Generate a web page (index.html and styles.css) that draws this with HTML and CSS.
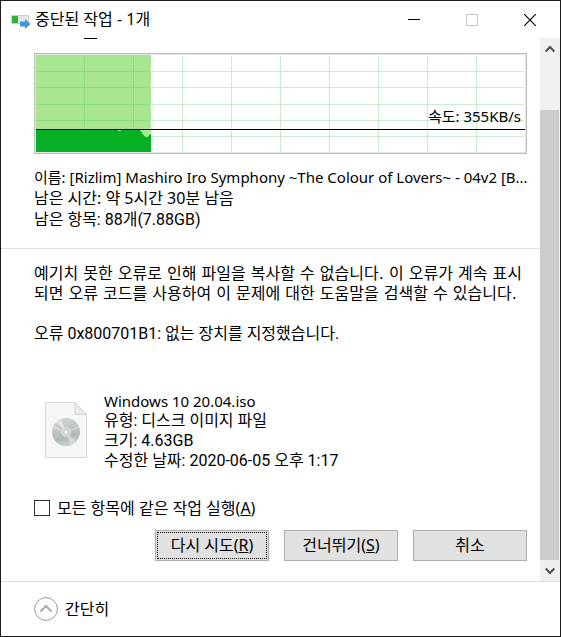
FILE: index.html
```html
<!DOCTYPE html>
<html lang="ko">

<head>
    <meta charset="UTF-8">
    <meta name="viewport" content="width=device-width, initial-scale=1.0">
    <title>중단된 작업 - 1개</title>
    <link rel="stylesheet" href="styles.css">
</head>

<body>

    <div class="window">
        <header class="titlebar">
            <svg class="titlebar-icon" width="20" height="14" viewBox="0 0 20 14" aria-hidden="true">
                <rect x="0.5" y="0.5" width="17" height="8" fill="#e6e6e6" stroke="#cfcfcf"/>
                <rect x="1" y="1" width="6" height="7" fill="#32b032"/>
                <path d="M9 6.500h5V4l5.500 5L14 14v-2.500H9z" fill="#3c96e4"/>
            </svg>
            <h1 class="titlebar-title">중단된 작업 - 1개</h1>
            <div class="titlebar-buttons">
                <button class="titlebar-button" type="button" aria-label="최소화">
                    <svg width="12" height="12" viewBox="0 0 12 12"><path d="M0 5.500h12" stroke="#000"/></svg>
                </button>
                <button class="titlebar-button" type="button" aria-label="최대화" disabled>
                    <svg width="12" height="12" viewBox="0 0 12 12"><rect x="0.5" y="0.5" width="11" height="11" fill="none" stroke="#ccc"/></svg>
                </button>
                <button class="titlebar-button" type="button" aria-label="닫기">
                    <svg width="12" height="12" viewBox="0 0 12 12"><path d="M0 0l12 12M12 0L0 12" stroke="#000" stroke-width="1.1"/></svg>
                </button>
            </div>
        </header>

        <div class="content">
            <main class="panel">
                <section class="progress">
                    <div class="clipped-heading"></div>
                    <div class="chart">
                        <svg class="chart-plot" viewBox="0 0 489 97" preserveAspectRatio="none" shape-rendering="crispEdges" aria-hidden="true">
                            <rect width="115" height="97" fill="#a8e692"/>
                            <path d="M0 16.500h488M0 32.500h488M0 49.500h488M0 65.500h488M0 81.500h488M48.500 1v96M97.500 1v96M146.500 1v96M195.500 1v96M244.500 1v96M293.500 1v96M342.500 1v96M391.500 1v96M440.500 1v96" fill="none" stroke="#c8eed0"/>
                            <path d="M0 16.500h114M0 32.500h114M0 49.500h114M0 65.500h114M48.500 1v74M97.500 1v74" fill="none" stroke="#8ade7a"/>
                            <path d="M0 74h115v23H0z" fill="#06b025"/>
                            <path d="M82 75h3v1h-3zM104 75h11v3l-4 4h-2z" fill="#a8e692"/>
                            <path d="M0 74.500h489" stroke="#000"/>
                        </svg>
                        <span class="chart-speed">속도: 355KB/s</span>
                    </div>
                    <div class="progress-info">
                        <p class="file-name">이름: [Rizlim] Mashiro Iro Symphony ~The Colour of Lovers~ - 04v2 [B...</p>
                        <p>남은 시간: 약 5시간 30분 남음</p>
                        <p class="values">남은 항목: 88개(7.88GB)</p>
                    </div>
                </section>

                <section class="error">
                    <p class="message">예기치 못한 오류로 인해 파일을 복사할 수 없습니다. 이 오류가 계속 표시<br>되면 오류 코드를 사용하여 이 문제에 대한 도움말을 검색할 수 있습니다.</p>
                    <p class="error-code values">오류 0x800701B1: 없는 장치를 지정했습니다.</p>

                    <div class="file">
                        <svg class="file-icon" width="42" height="56" viewBox="0 0 42 56" aria-hidden="true">
                            <defs>
                                <linearGradient id="disc" x1="0" y1="0" x2="0.3" y2="1">
                                    <stop offset="0" stop-color="#d3dbda"/>
                                    <stop offset="0.4" stop-color="#c2cac9"/>
                                    <stop offset="0.75" stop-color="#b2b9b8"/>
                                    <stop offset="1" stop-color="#c4caca"/>
                                </linearGradient>
                            </defs>
                            <path d="M0.5 0.5h29.500l11.500 12v43h-41z" fill="#f5f6f7" stroke="#d9dadc"/>
                            <path d="M30 0.5v12h11.500z" fill="#eaebed" stroke="#cfd1d3"/>
                            <circle cx="21" cy="30" r="14" fill="url(#disc)"/>
                            <path d="M21 30L11 20.200A14 14 0 0 1 16 17z" fill="#e0e6e4"/>
                            <path d="M21 30L31 39.800A14 14 0 0 1 26 43z" fill="#d3d9d8"/>
                            <path d="M21 30L7.500 26.500l1-3z" fill="#ddd3e0"/>
                            <path d="M21 30l12.500-6 0.800 2z" fill="#cde0cd"/>
                            <circle cx="21" cy="30" r="4.500" fill="#cfd5d4" stroke="#dde1e0"/>
                            <circle cx="21" cy="30" r="2" fill="#f5f6f7" stroke="#c4caca" stroke-width="0.500"/>
                        </svg>
                        <div class="file-details values">
                            <p class="iso-name">Windows 10 20.04.iso</p>
                            <p>유형: 디스크 이미지 파일</p>
                            <p>크기: 4.63GB</p>
                            <p>수정한 날짜: 2020-06-05 오후 1:17</p>
                        </div>
                    </div>

                    <div class="apply-all">
                        <input type="checkbox" id="applyAll">
                        <label for="applyAll">모든 항목에 같은 작업 실행(<u>A</u>)</label>
                    </div>

                    <div class="actions">
                        <button class="action action-default" type="button">다시 시도(<u>R</u>)</button>
                        <button class="action" type="button">건너뛰기(<u>S</u>)</button>
                        <button class="action" type="button">취소</button>
                    </div>
                </section>
            </main>

            <div class="scrollbar">
                <button class="scroll-button" type="button" aria-label="위로">
                    <svg width="10" height="8" viewBox="0 0 10 8"><path d="M0.700 6.500L5 2l4.300 4.500" fill="none" stroke="#505050" stroke-width="2"/></svg>
                </button>
                <div class="scroll-thumb"></div>
                <button class="scroll-button" type="button" aria-label="아래로">
                    <svg width="10" height="8" viewBox="0 0 10 8"><path d="M0.700 1.500L5 6l4.300-4.500" fill="none" stroke="#505050" stroke-width="2"/></svg>
                </button>
            </div>
        </div>

        <footer class="footer">
            <button class="toggle" type="button">
                <svg width="24" height="24" viewBox="0 0 24 24" aria-hidden="true">
                    <circle cx="12" cy="12" r="11.400" fill="none" stroke="#999"/>
                    <path d="M6.500 14.500L12 9l5.500 5.500" fill="none" stroke="#aaa" stroke-width="2"/>
                </svg>
                간단히
            </button>
        </footer>
    </div>

</body>

</html>
```
FILE: styles.css
```css
* {
    box-sizing: border-box;
}

body {
    margin: 0;
    font-family: "Noto Sans", "Noto Sans CJK KR", sans-serif;
    font-size: 16px;
    line-height: 20px;
    color: #000;
    background-color: #fff;
}

h1,
p {
    margin: 0;
    font-size: inherit;
    font-weight: normal;
}

button {
    padding: 0;
    border: none;
    background: none;
    font: inherit;
    color: inherit;
}

svg {
    display: block;
}

.window {
    display: flex;
    flex-direction: column;
    min-height: 100vh;
    border: 1px solid #1c1c1c;
}

/* Title bar */
.titlebar {
    display: flex;
    align-items: center;
    height: 37px;
    padding-left: 10px;
}

.titlebar-icon {
    margin-top: 4px;
    margin-right: 4px;
}

.titlebar-title {
    flex: 1;
    padding-bottom: 2px;
}

.titlebar-buttons {
    display: flex;
    padding-right: 1px;
}

.titlebar-button {
    display: flex;
    align-items: center;
    justify-content: center;
    width: 58px;
    height: 36px;
}

/* Scrolled area */
.content {
    display: flex;
    flex: 1;
    border-bottom: 1px solid #dfdfdf;
}

.panel {
    flex: 1;
    min-width: 0;
}

.progress {
    padding: 0 13px 18px 33px;
    border-bottom: 1px solid #dfdfdf;
}

/* last visible stroke of the heading that is scrolled away */
.clipped-heading {
    width: 13px;
    height: 1px;
    margin: 0 0 14px 50px;
    background-color: #000;
}

.chart {
    position: relative;
    border: 1px solid #bcbcbc;
    outline: 1px solid #e6e6e6;
    outline-offset: -2px;
    padding: 1px;
}

.chart-plot {
    width: 100%;
    height: 97px;
}

.chart-speed {
    position: absolute;
    right: 5px;
    bottom: 27px;
    font-size: 15px;
}

.progress-info {
    margin-top: 13px;
    line-height: 21px;
}

.file-name {
    font-size: 15px;
    white-space: nowrap;
}

/* lines that mix Korean with numbers */
.values {
    font-family: Roboto, "Noto Sans CJK KR", sans-serif;
}

.error {
    padding: 15px 13px 19px 33px;
    white-space: nowrap;
}

.message {
    font-family: "DejaVu Sans", "Noto Sans CJK KR", sans-serif;
}

.error-code {
    margin-top: 20px;
}

.file {
    display: flex;
    gap: 17px;
    margin-top: 47px;
    padding-left: 11px;
}

.file-icon {
    margin-top: 11px;
}

.iso-name {
    font-family: "Noto Sans", sans-serif;
    font-size: 15px;
}

.apply-all {
    display: flex;
    align-items: center;
    gap: 7px;
    margin-top: 27px;
}

.apply-all input {
    appearance: none;
    width: 16px;
    height: 16px;
    margin: 0;
    border: 1px solid #333;
    background-color: #fff;
}

.apply-all input:checked {
    background-color: #333;
}

.actions {
    display: flex;
    justify-content: flex-end;
    gap: 15px;
    margin-top: 12px;
}

.action {
    width: 114px;
    height: 31px;
    padding-bottom: 2px;
    border: 1px solid #adadad;
    background-color: #e1e1e1;
}

.action-default {
    outline: 1px dotted #000;
    outline-offset: -3px;
}

/* Scrollbar */
.scrollbar {
    display: flex;
    flex-direction: column;
    width: 20px;
    padding-right: 1px;
    background-color: #f0f0f0;
}

.scroll-button {
    display: flex;
    align-items: center;
    justify-content: center;
    height: 21px;
}

.scroll-thumb {
    flex: 1;
    margin-top: 51px;
    background-color: #cdcdcd;
}

/* Footer */
.footer {
    padding: 15px 33px;
}

.toggle {
    display: flex;
    align-items: center;
    gap: 7px;
}
```
